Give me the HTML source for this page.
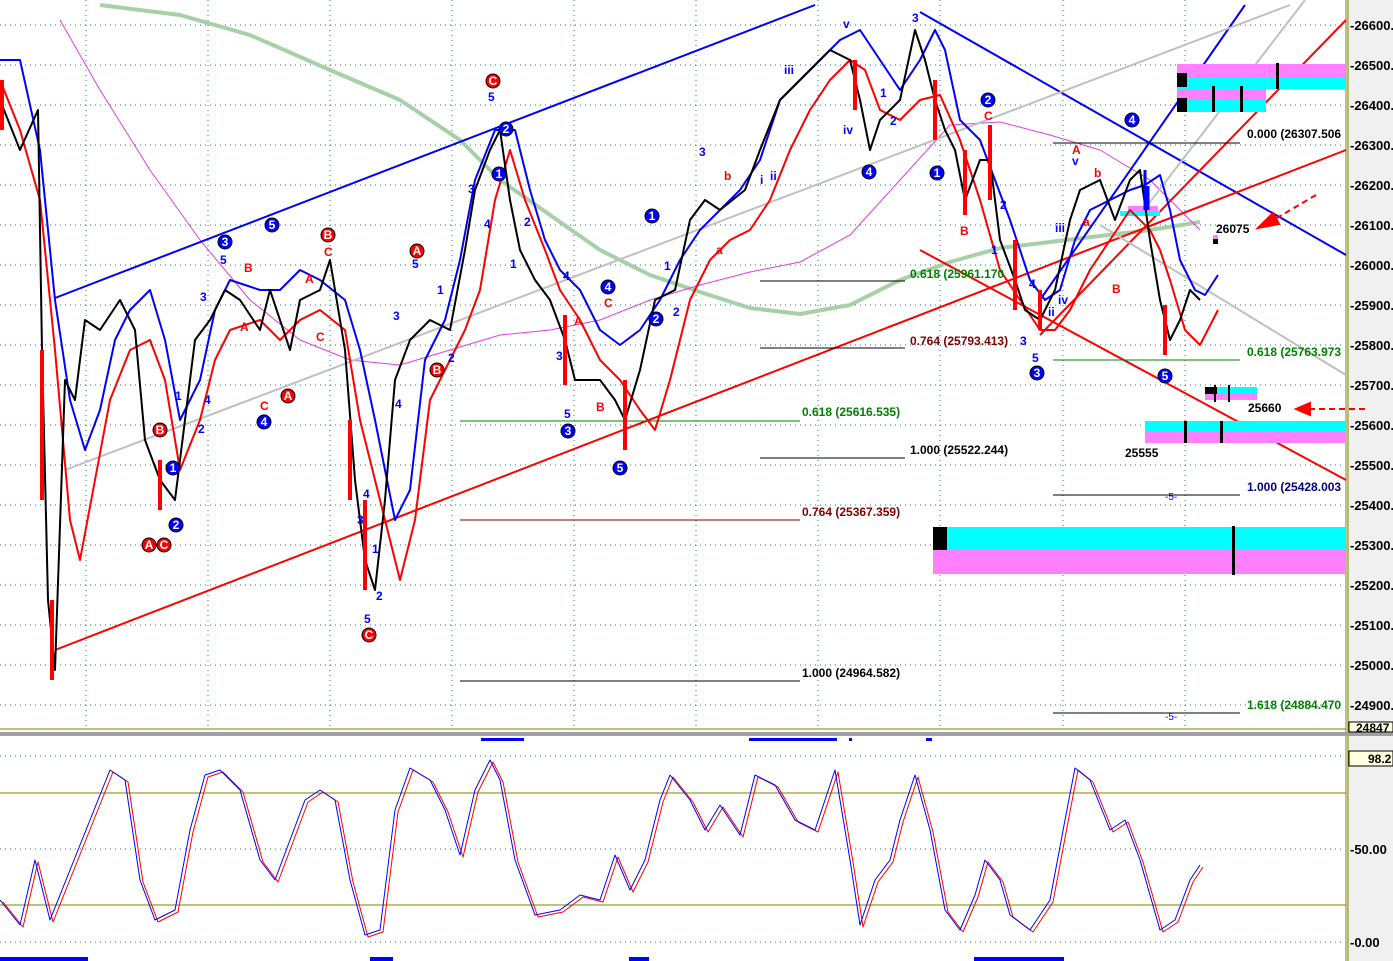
<!DOCTYPE html>
<html><head><meta charset="utf-8"><style>
html,body{margin:0;padding:0;background:#fff;}
svg{display:block;font-family:"Liberation Sans",Arial,sans-serif;}
.ax{font-size:13px;font-weight:bold;fill:#000;}
.lb{font-size:12px;font-weight:bold;}
.w{font-size:12px;font-weight:bold;}
polyline{stroke-linejoin:round;}
</style></head><body>
<svg width="1393" height="961" viewBox="0 0 1393 961" xmlns="http://www.w3.org/2000/svg">
<rect width="1393" height="961" fill="#fff"/>
<rect x="1347" y="0" width="46" height="961" fill="#f0f0f0"/>
<line x1="1346" y1="0" x2="1346" y2="961" stroke="#808000" stroke-width="1"/>
<line x1="1348" y1="0" x2="1348" y2="961" stroke="#808000" stroke-width="1"/>
<g stroke="#2a7a7a" stroke-dasharray="1,4" stroke-width="1">
<line x1="0" y1="25" x2="1345" y2="25"/><line x1="0" y1="65" x2="1345" y2="65"/><line x1="0" y1="105" x2="1345" y2="105"/><line x1="0" y1="145" x2="1345" y2="145"/><line x1="0" y1="185" x2="1345" y2="185"/><line x1="0" y1="225" x2="1345" y2="225"/><line x1="0" y1="265" x2="1345" y2="265"/><line x1="0" y1="305" x2="1345" y2="305"/><line x1="0" y1="345" x2="1345" y2="345"/><line x1="0" y1="385" x2="1345" y2="385"/><line x1="0" y1="425" x2="1345" y2="425"/><line x1="0" y1="465" x2="1345" y2="465"/><line x1="0" y1="505" x2="1345" y2="505"/><line x1="0" y1="545" x2="1345" y2="545"/><line x1="0" y1="585" x2="1345" y2="585"/><line x1="0" y1="625" x2="1345" y2="625"/><line x1="0" y1="665" x2="1345" y2="665"/><line x1="0" y1="705" x2="1345" y2="705"/>
<line x1="0" y1="756" x2="1345" y2="756"/><line x1="0" y1="849" x2="1345" y2="849"/><line x1="0" y1="942" x2="1345" y2="942"/>
<line x1="86" y1="0" x2="86" y2="728"/><line x1="208" y1="0" x2="208" y2="728"/><line x1="330" y1="0" x2="330" y2="728"/><line x1="452" y1="0" x2="452" y2="728"/><line x1="574" y1="0" x2="574" y2="728"/><line x1="696" y1="0" x2="696" y2="728"/><line x1="818" y1="0" x2="818" y2="728"/><line x1="940" y1="0" x2="940" y2="728"/><line x1="1063" y1="0" x2="1063" y2="728"/><line x1="1185" y1="0" x2="1185" y2="728"/>
</g>
<line x1="0" y1="729" x2="1346" y2="729" stroke="#808000"/>
<rect x="0" y="732" width="1393" height="4" fill="#a0a0a0"/>
<line x1="0" y1="793" x2="1346" y2="793" stroke="#808000"/>
<line x1="0" y1="905" x2="1346" y2="905" stroke="#808000"/>
<polyline fill="none" stroke="#a8d0a8" stroke-width="4" points="100,5 180,15 250,35 330,70 400,100 460,140 500,180 550,215 600,250 650,275 700,292 750,308 800,314 850,305 900,280 950,262 1000,248 1050,242 1100,236 1150,230 1200,222"/>
<polyline fill="none" stroke="#e040e0" stroke-width="1" points="60,20 100,90 150,170 200,240 250,300 300,340 350,360 400,365 450,350 500,335 550,330 600,320 650,300 700,285 750,272 800,262 850,235 900,180 950,125 1000,122 1050,135 1100,150 1150,180 1200,230"/>
<g fill="none" stroke-width="2">
<line x1="55" y1="298" x2="815" y2="5" stroke="#0000ff"/>
<line x1="920" y1="12" x2="1346" y2="255" stroke="#0000ff"/>
<line x1="1040" y1="300" x2="1245" y2="5" stroke="#0000ff"/>
<line x1="55" y1="650" x2="1346" y2="150" stroke="#ff0000"/>
<line x1="1346" y1="20" x2="1040" y2="335" stroke="#ff0000"/>
<line x1="920" y1="250" x2="1346" y2="480" stroke="#ff0000"/>
<line x1="65" y1="470" x2="1290" y2="5" stroke="#c0c0c0"/>
<line x1="1305" y1="0" x2="1140" y2="215" stroke="#c0c0c0"/>
<line x1="1100" y1="225" x2="1346" y2="375" stroke="#c0c0c0"/>
</g>
<g stroke-width="1">
<line x1="1053" y1="143" x2="1240" y2="143" stroke="#000"/>
<line x1="760" y1="281" x2="905" y2="281" stroke="#000"/>
<line x1="760" y1="348" x2="905" y2="348" stroke="#000"/>
<line x1="1053" y1="360" x2="1240" y2="360" stroke="#008000"/>
<line x1="460" y1="421" x2="800" y2="421" stroke="#008000"/>
<line x1="760" y1="458" x2="905" y2="458" stroke="#000"/>
<line x1="1053" y1="495" x2="1240" y2="495" stroke="#000"/>
<line x1="460" y1="520" x2="800" y2="520" stroke="#800000"/>
<line x1="460" y1="681" x2="800" y2="681" stroke="#000"/>
<line x1="1053" y1="713" x2="1240" y2="713" stroke="#000"/>
</g>
<rect x="1177" y="64" width="169" height="13" fill="#ff80ff"/><rect x="1177" y="77" width="169" height="12" fill="#00ffff"/>
<rect x="1177" y="89" width="89" height="11" fill="#ff80ff"/><rect x="1177" y="100" width="89" height="12" fill="#00ffff"/>
<rect x="1177" y="73" width="10" height="14" fill="#000"/><rect x="1177" y="98" width="10" height="14" fill="#000"/>
<rect x="1276" y="63" width="3" height="26" fill="#000"/><rect x="1212" y="86" width="3" height="26" fill="#000"/><rect x="1240" y="86" width="3" height="26" fill="#000"/>
<rect x="1205" y="387" width="52" height="7" fill="#00ffff"/><rect x="1205" y="394" width="52" height="6" fill="#ff80ff"/><rect x="1205" y="387" width="12" height="7" fill="#000"/>
<rect x="1214" y="385" width="2" height="17" fill="#000"/><rect x="1228" y="385" width="2" height="17" fill="#000"/>
<rect x="1145" y="421" width="201" height="11" fill="#00ffff"/><rect x="1145" y="432" width="201" height="11" fill="#ff80ff"/>
<rect x="1184" y="421" width="3" height="22" fill="#000"/><rect x="1220" y="421" width="3" height="22" fill="#000"/>
<rect x="933" y="527" width="413" height="23" fill="#00ffff"/><rect x="933" y="550" width="413" height="24" fill="#ff80ff"/>
<rect x="933" y="527" width="14" height="23" fill="#000"/><rect x="1232" y="526" width="3" height="49" fill="#000"/>
<rect x="1128" y="206" width="30" height="5" fill="#ff80ff"/><rect x="1120" y="211" width="40" height="5" fill="#00ffff"/>
<polyline fill="none" stroke="#0000ff" stroke-width="2" points="0,60 20,60 40,150 55,300 70,400 85,450 100,410 115,340 130,310 150,290 165,340 180,420 200,380 215,310 230,280 260,290 280,290 300,270 320,280 345,300 360,350 375,420 395,520 410,490 425,360 445,320 460,260 475,180 495,130 515,130 530,190 545,240 560,270 580,290 600,330 620,345 640,330 660,300 680,260 700,230 720,210 740,190 760,160 780,100 800,80 820,60 840,40 860,30 880,60 900,90 920,60 935,30 945,50 960,120 980,140 995,180 1010,220 1030,280 1045,300 1060,290 1075,240 1090,210 1110,200 1130,190 1145,185 1160,175 1170,210 1180,260 1195,290 1205,295 1218,275"/>
<polyline fill="none" stroke="#ff0000" stroke-width="2" points="0,80 20,130 40,200 55,350 70,520 80,560 95,480 110,400 130,350 150,340 165,380 180,470 200,420 215,360 230,330 260,320 280,340 300,320 320,310 345,330 360,420 380,500 400,580 415,520 430,400 450,360 465,330 480,290 495,200 510,150 525,200 545,250 560,290 580,320 600,360 620,380 640,410 655,430 670,380 690,300 710,260 730,240 750,230 770,200 790,150 810,110 830,80 850,60 865,70 880,110 900,120 920,100 940,95 960,140 980,200 1000,270 1020,300 1040,330 1055,330 1070,310 1090,270 1110,240 1130,210 1150,230 1160,250 1170,280 1185,330 1200,345 1218,310"/>
<polyline fill="none" stroke="#000" stroke-width="2" points="0,100 20,150 38,110 42,350 48,600 55,670 65,380 75,400 85,320 100,330 120,300 135,330 145,440 160,480 175,500 185,420 195,340 210,320 225,290 240,300 260,330 270,290 290,350 300,300 320,290 330,260 345,350 355,480 365,560 375,590 385,500 395,380 410,340 430,320 450,330 465,250 475,190 490,150 500,130 510,200 520,250 535,280 550,300 565,340 575,380 600,380 615,400 625,420 640,370 655,300 675,290 690,220 705,200 720,210 745,190 760,150 780,100 800,80 830,50 850,60 860,100 870,150 880,120 900,100 915,30 925,60 935,100 945,130 955,150 965,200 980,160 990,160 1000,240 1015,280 1025,310 1040,320 1055,290 1070,220 1080,190 1100,180 1115,220 1130,180 1140,170 1150,240 1160,300 1170,340 1180,320 1190,290 1200,300"/>
<g stroke="#ff0000" stroke-width="4">
<line x1="2" y1="80" x2="2" y2="130"/><line x1="42" y1="350" x2="42" y2="500"/><line x1="52" y1="600" x2="52" y2="680"/><line x1="160" y1="460" x2="160" y2="510"/><line x1="350" y1="420" x2="350" y2="500"/><line x1="365" y1="500" x2="365" y2="590"/><line x1="565" y1="315" x2="565" y2="385"/><line x1="625" y1="380" x2="625" y2="450"/><line x1="855" y1="60" x2="855" y2="110"/><line x1="935" y1="80" x2="935" y2="140"/><line x1="965" y1="150" x2="965" y2="215"/><line x1="990" y1="125" x2="990" y2="200"/><line x1="1015" y1="240" x2="1015" y2="310"/><line x1="1040" y1="290" x2="1040" y2="330"/><line x1="1165" y1="305" x2="1165" y2="355"/>
</g>
<g stroke="#0000ff" stroke-width="3"><line x1="1145" y1="170" x2="1145" y2="210"/><line x1="1148" y1="186" x2="1148" y2="210"/></g>
<g fill="#0000ff" stroke="#000" stroke-width="1">
<circle cx="225" cy="242" r="7"/><circle cx="272" cy="225" r="7"/><circle cx="173" cy="468" r="7"/><circle cx="176" cy="525" r="7"/><circle cx="264" cy="422" r="7"/><circle cx="506" cy="129" r="7"/><circle cx="499" cy="174" r="7"/><circle cx="568" cy="431" r="7"/><circle cx="608" cy="287" r="7"/><circle cx="620" cy="468" r="7"/><circle cx="656" cy="319" r="7"/><circle cx="652" cy="216" r="7"/><circle cx="869" cy="172" r="7"/><circle cx="937" cy="173" r="7"/><circle cx="988" cy="100" r="7"/><circle cx="1132" cy="120" r="7"/><circle cx="1037" cy="373" r="7"/><circle cx="1165" cy="376" r="7"/>
</g>
<g fill="#ff0000" stroke="#000" stroke-width="1">
<circle cx="493" cy="81" r="7"/><circle cx="328" cy="235" r="7"/><circle cx="417" cy="251" r="7"/><circle cx="160" cy="430" r="7"/><circle cx="288" cy="396" r="7"/><circle cx="437" cy="370" r="7"/><circle cx="149" cy="545" r="7"/><circle cx="164" cy="545" r="7"/><circle cx="369" cy="635" r="7"/>
</g>
<g class="w" fill="#fff" text-anchor="middle" font-size="10">
<text x="225" y="246">3</text><text x="272" y="229">5</text><text x="173" y="472">1</text><text x="176" y="529">2</text><text x="264" y="426">4</text><text x="506" y="133">2</text><text x="499" y="178">1</text><text x="568" y="435">3</text><text x="608" y="291">4</text><text x="620" y="472">5</text><text x="656" y="323">2</text><text x="652" y="220">1</text><text x="869" y="176">4</text><text x="937" y="177">1</text><text x="988" y="104">2</text><text x="1132" y="124">4</text><text x="1037" y="377">3</text><text x="1165" y="380">5</text>
<text x="493" y="85">C</text><text x="328" y="239">B</text><text x="417" y="255">A</text><text x="160" y="434">B</text><text x="288" y="400">A</text><text x="437" y="374">B</text><text x="149" y="549">A</text><text x="164" y="549">C</text><text x="369" y="639">C</text>
</g>
<g class="w" fill="#0000ff" font-size="11">
<text x="488" y="101">5</text><text x="220" y="264">5</text><text x="200" y="301">3</text><text x="175" y="400">1</text><text x="198" y="433">2</text><text x="204" y="404">4</text><text x="393" y="320">3</text><text x="412" y="268">5</text><text x="437" y="294">1</text><text x="395" y="408">4</text><text x="372" y="553">1</text><text x="376" y="600">2</text><text x="357" y="524">3</text><text x="363" y="498">4</text><text x="364" y="623">5</text><text x="468" y="193">3</text><text x="484" y="228">4</text><text x="524" y="226">2</text><text x="510" y="268">1</text><text x="563" y="280">4</text><text x="556" y="360">3</text><text x="564" y="418">5</text><text x="664" y="270">1</text><text x="673" y="316">2</text><text x="699" y="156">3</text><text x="784" y="74">iii</text><text x="843" y="28">v</text><text x="843" y="134">iv</text><text x="912" y="22">3</text><text x="880" y="97">1</text><text x="890" y="125">2</text><text x="1000" y="209">2</text><text x="991" y="254">1</text><text x="1029" y="288">4</text><text x="1020" y="345">3</text><text x="1032" y="362">5</text><text x="1072" y="165">v</text><text x="1055" y="232">iii</text><text x="1058" y="304">iv</text><text x="1048" y="316">ii</text><text x="760" y="184">i</text><text x="770" y="180">ii</text><text x="448" y="362">2</text>
</g>
<g class="w" fill="#ff0000" font-size="11">
<text x="244" y="272">B</text><text x="305" y="283">A</text><text x="240" y="331">A</text><text x="316" y="341">C</text><text x="324" y="256">C</text><text x="260" y="410">C</text><text x="574" y="325">A</text><text x="604" y="307">C</text><text x="596" y="411">B</text><text x="724" y="180">b</text><text x="716" y="254">a</text><text x="984" y="120">C</text><text x="960" y="235">B</text><text x="1072" y="154">A</text><text x="1083" y="226">a</text><text x="1094" y="177">b</text><text x="1112" y="293">B</text>
</g>
<g class="lb">
<text x="1247" y="138" fill="#000">0.000 (26307.506</text>
<text x="910" y="278" fill="#008000">0.618 (25961.170</text>
<text x="910" y="345" fill="#800000">0.764 (25793.413)</text>
<text x="1247" y="356" fill="#008000">0.618 (25763.973</text>
<text x="802" y="416" fill="#008000">0.618 (25616.535)</text>
<text x="910" y="454" fill="#000">1.000 (25522.244)</text>
<text x="1247" y="491" fill="#000080">1.000 (25428.003</text>
<text x="802" y="516" fill="#800000">0.764 (25367.359)</text>
<text x="802" y="677" fill="#000">1.000 (24964.582)</text>
<text x="1247" y="709" fill="#008000">1.618 (24884.470</text>
<text x="1216" y="233" fill="#000">26075</text>
<text x="1248" y="412" fill="#000">25660</text>
<text x="1125" y="457" fill="#000">25555</text>
<text x="1165" y="500" fill="#0000ff" font-weight="normal" font-size="10">-5-</text>
<text x="1165" y="720" fill="#0000ff" font-weight="normal" font-size="10">-5-</text>
</g>
<g stroke="#ff0000" stroke-width="2" fill="#ff0000">
<line x1="1316" y1="195" x2="1270" y2="222" stroke-dasharray="6,4"/><polygon points="1258,228 1273,213 1279,224"/>
<line x1="1365" y1="409" x2="1308" y2="409" stroke-dasharray="6,4"/><polygon points="1296,409 1310,403 1310,415"/>
</g>
<rect x="1213" y="239" width="5" height="5" fill="#000"/><rect x="1213" y="235" width="5" height="4" fill="#ff80ff"/>
<g class="ax">
<text x="1350" y="30">-26600.</text><text x="1350" y="70">-26500.</text><text x="1350" y="110">-26400.</text><text x="1350" y="150">-26300.</text><text x="1350" y="190">-26200.</text><text x="1350" y="230">-26100.</text><text x="1350" y="270">-26000.</text><text x="1350" y="310">-25900.</text><text x="1350" y="350">-25800.</text><text x="1350" y="390">-25700.</text><text x="1350" y="430">-25600.</text><text x="1350" y="470">-25500.</text><text x="1350" y="510">-25400.</text><text x="1350" y="550">-25300.</text><text x="1350" y="590">-25200.</text><text x="1350" y="630">-25100.</text><text x="1350" y="670">-25000.</text><text x="1350" y="710">-24900.</text>
<text x="1350" y="854">-50.00</text><text x="1350" y="947">-0.00</text>
</g>
<rect x="1349" y="722" width="44" height="10" fill="#ffffe0" stroke="#000"/><text x="1356" y="732" font-size="12" font-weight="bold">24847</text>
<rect x="1349" y="751" width="44" height="15" fill="#ffffe0" stroke="#000"/><text x="1368" y="763" font-size="12" font-weight="bold">98.2</text>
<g fill="#0000ff"><rect x="481" y="738" width="43" height="3"/><rect x="749" y="738" width="88" height="3"/><rect x="849" y="738" width="3" height="3"/><rect x="926" y="738" width="6" height="3"/>
<rect x="0" y="957" width="88" height="4"/><rect x="370" y="957" width="23" height="4"/><rect x="629" y="957" width="20" height="4"/><rect x="974" y="957" width="90" height="4"/></g>
<polyline fill="none" stroke="#ff0000" stroke-width="1" transform="translate(3,2)" points="0,900 20,925 35,860 50,920 70,870 90,820 110,770 125,780 140,880 155,920 175,910 190,830 205,775 220,770 240,790 260,860 275,880 290,840 305,800 320,790 335,800 350,880 365,935 380,930 395,810 410,768 430,780 445,810 460,855 475,790 490,760 500,780 515,860 535,915 560,910 580,895 600,900 615,855 630,890 645,860 660,800 670,775 690,800 705,830 720,805 740,835 755,775 775,785 795,820 815,830 835,770 850,860 860,925 875,880 890,860 900,820 915,775 930,830 945,910 960,930 975,895 985,860 1000,880 1010,915 1030,930 1050,900 1065,820 1075,768 1090,780 1110,830 1125,820 1140,860 1160,930 1175,920 1190,880 1200,865"/>
<polyline fill="none" stroke="#0000ff" stroke-width="1" points="0,900 20,925 35,860 50,920 70,870 90,820 110,770 125,780 140,880 155,920 175,910 190,830 205,775 220,770 240,790 260,860 275,880 290,840 305,800 320,790 335,800 350,880 365,935 380,930 395,810 410,768 430,780 445,810 460,855 475,790 490,760 500,780 515,860 535,915 560,910 580,895 600,900 615,855 630,890 645,860 660,800 670,775 690,800 705,830 720,805 740,835 755,775 775,785 795,820 815,830 835,770 850,860 860,925 875,880 890,860 900,820 915,775 930,830 945,910 960,930 975,895 985,860 1000,880 1010,915 1030,930 1050,900 1065,820 1075,768 1090,780 1110,830 1125,820 1140,860 1160,930 1175,920 1190,880 1200,865"/>
</svg>
</body></html>
